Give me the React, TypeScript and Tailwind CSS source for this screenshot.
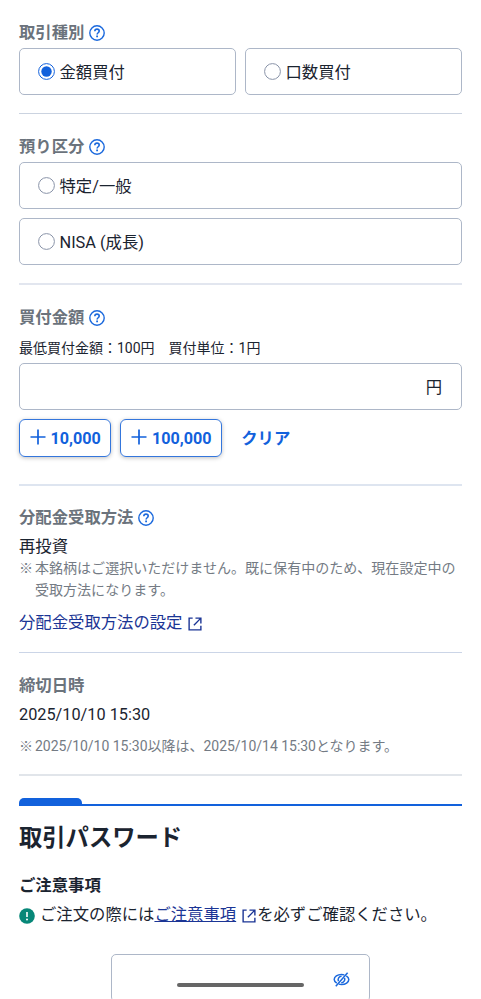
import { useState } from 'react';

export default function App() {
  const [tradeType, setTradeType] = useState('amount');
  const [account, setAccount] = useState('');
  const [amount, setAmount] = useState(0);

  return (
    <div className="h-[999px] overflow-hidden bg-white px-[19px] pt-[18px] font-['Roboto','Noto_Sans_CJK_JP',sans-serif] text-[16.35px] text-[#1b2430]">
      <section>
        <Heading title="取引種別" help />
        <div className="mt-[2px] grid grid-cols-2 gap-[9px]">
          <RadioCard label="金額買付" checked={tradeType === 'amount'} onClick={() => setTradeType('amount')} />
          <RadioCard label="口数買付" checked={tradeType === 'units'} onClick={() => setTradeType('units')} />
        </div>
      </section>

      <div className="mt-[18px] h-px bg-[#cbd3e0]" />

      <section className="pt-[18px]">
        <Heading title="預り区分" help />
        <div className="mt-[2px] flex flex-col gap-[9px]">
          <RadioCard label="特定/一般" checked={account === 'general'} onClick={() => setAccount('general')} />
          <RadioCard label="NISA (成長)" checked={account === 'nisa'} onClick={() => setAccount('nisa')} />
        </div>
      </section>

      <div className="mt-[18px] h-[2px] bg-[#e2e6ef]" />

      <section className="pt-[18px]">
        <Heading title="買付金額" help />
        <p className="mt-[6px] h-[22px] text-[14px] leading-[22px]">最低買付金額：100円　買付単位：1円</p>
        <div className="mt-1 flex h-[47px] items-center rounded-[5px] border border-[#adb7c8] pr-[19px] pl-[19px]">
          <input
            className="min-w-0 flex-1 text-right outline-none"
            value={amount ? amount.toLocaleString() : ''}
            readOnly
          />
          <span className="pt-[4px]">円</span>
        </div>
        <div className="mt-[9px] flex h-[38px] items-center">
          <AddButton label="10,000" onClick={() => setAmount(amount + 10000)} />
          <span className="w-[9px]" />
          <AddButton label="100,000" onClick={() => setAmount(amount + 100000)} />
          <button className="ml-[19px] pt-[2px] font-bold text-[#1261dc]" onClick={() => setAmount(0)}>
            クリア
          </button>
        </div>
      </section>

      <div className="mt-[27px] h-[2px] bg-[#dee5f0]" />

      <section className="pt-[17px]">
        <Heading title="分配金受取方法" help />
        <p className="h-[26px] leading-[31px]">再投資</p>
        <div className="flex text-[14.04px] leading-[22px] text-[#747b84]">
          <span className="w-4 shrink-0">※</span>
          <p className="whitespace-nowrap">
            本銘柄はご選択いただけません。既に保有中のため、現在設定中の
            <br />
            受取方法になります。
          </p>
        </div>
        <a className="mt-[9px] flex h-[26px] items-center text-[#1b3595]">
          分配金受取方法の設定
          <ExternalIcon className="ml-[6px] mt-[2px]" />
        </a>
      </section>

      <div className="mt-[16px] h-px bg-[#cbd5e7]" />

      <section className="pt-[18px]">
        <Heading title="締切日時" />
        <p className="mt-[2px] h-[28px] text-[16.3px] leading-[28px]">2025/10/10 15:30</p>
        <div className="mt-[6px] flex h-[22px] text-[14px] leading-[22px] text-[#747b84]">
          <span className="w-4 shrink-0">※</span>
          <p className="tracking-[-0.02px]">2025/10/10 15:30以降は、2025/10/14 15:30となります。</p>
        </div>
      </section>

      <div className="mt-[17px] h-[2px] bg-[#e1e5ea]" />

      <section className="mt-[22px]">
        <div className="flex h-2 items-end border-b-2 border-[#1261dc]">
          <span className="h-[6px] w-[63px] rounded-t-[5px] bg-[#1261dc]" />
        </div>
        <h2 className="mt-[15px] h-[34px] text-[23.3px] leading-[34px] font-bold">取引パスワード</h2>
        <h3 className="mt-[18px] h-[26px] leading-[26px] font-bold">ご注意事項</h3>
        <p className="mt-[3px] flex h-[26px] items-center whitespace-nowrap">
          <svg className="mt-[2px] mr-[5px] shrink-0" width="16" height="16" viewBox="0 0 16 16">
            <circle cx="8" cy="8" r="7.8" fill="#078778" />
            <path d="M8 4v5" stroke="#fff" strokeWidth="1.6" />
            <circle cx="8" cy="11.4" r="1" fill="#fff" />
          </svg>
          ご注文の際には
          <a className="text-[#1b3595] underline">ご注意事項</a>
          <ExternalIcon className="ml-[6px] mr-px mt-[2px]" />
          を必ずご確認ください。
        </p>
        <div className="mx-auto mt-[26px] flex h-[48px] w-[259px] items-center justify-end rounded-[5px] border border-[#adb7c8] pr-[19px]">
          <EyeOffIcon />
        </div>
      </section>

      <div className="fixed bottom-[12px] left-[177px] h-[4px] w-[127px] rounded-full bg-[#666]" />
    </div>
  );
}

function Heading({ title, help }: any) {
  return (
    <h4 className="flex h-7 items-center gap-[5px] font-bold text-[#6b737c]">
      <span className="pt-[2px]">{title}</span>
      {help && (
        <svg className="mt-px" width="16" height="16" viewBox="0 0 16 16" fill="none" stroke="#1b69dd">
          <circle cx="8" cy="8" r="7.2" strokeWidth="1.4" />
          <path d="M5.8 6.2c.1-1.4 1-2.1 2.2-2.1s2.2.8 2.2 2c0 1.6-2.1 1.7-2.1 3.4" strokeWidth="1.6" />
          <path d="M8.1 10.5v1.7" strokeWidth="1.8" />
        </svg>
      )}
    </h4>
  );
}

function RadioCard({ label, checked, onClick }: any) {
  return (
    <button
      onClick={onClick}
      className="flex h-[47px] w-full items-center gap-[4.5px] rounded-[5px] border border-[#adb7c8] pl-[18px] text-left"
    >
      <svg width="17" height="17" viewBox="0 0 17 17">
        <circle cx="8.5" cy="8.5" r="7.9" fill="none" stroke={checked ? '#1261dc' : '#8993a8'} />
        {checked && <circle cx="8.5" cy="8.5" r="5.2" fill="#1261dc" />}
      </svg>
      <span className="pt-[3px]">{label}</span>
    </button>
  );
}

function AddButton({ label, onClick }: any) {
  return (
    <button
      onClick={onClick}
      className="flex h-[38px] items-center gap-[5px] rounded-[6px] border border-[#3476dc] px-[9.6px] text-[16.15px] font-bold text-[#1261dc] shadow-[0_1px_4px_rgba(0,0,0,0.25)]"
    >
      <svg className="-mt-[3px]" width="16" height="16" viewBox="0 0 16 16" fill="none" stroke="currentColor" strokeWidth="1.7">
        <path d="M8 .5v15M.5 8h15" />
      </svg>
      <span className="pt-[2px]">{label}</span>
    </button>
  );
}

function ExternalIcon({ className }: { className: string }) {
  return (
    <svg className={className} width="14" height="14" viewBox="0 0 15 15" fill="none" stroke="#1b3595" strokeWidth="1.5">
      <path d="M5 1.2H1.2v12.6h12.6V9.3" />
      <path d="M8 1.2h5.8V7M13.8 1.2L6.3 8.9" />
    </svg>
  );
}

function EyeOffIcon() {
  return (
    <svg className="mt-[2px]" width="17" height="15" viewBox="0 0 17 15" fill="none" stroke="#1b69dd" strokeWidth="1.5">
      <path d="M3.8 11.2C2 10 1.2 8.7 1.2 7.5c0-2.7 3.3-5 7.3-5 1 0 2 .1 2.8.4M13.3 3.8c1.6 1 2.5 2.3 2.5 3.7 0 2.7-3.3 5-7.3 5-1 0-1.9-.1-2.7-.4" />
      <path d="M5.4 9.3c-.9-2.5.5-5 3.2-5M11.6 5.9c.7 2.4-.7 4.8-3.4 4.8" />
      <path d="M14.6.7L2.8 14.2" />
    </svg>
  );
}
